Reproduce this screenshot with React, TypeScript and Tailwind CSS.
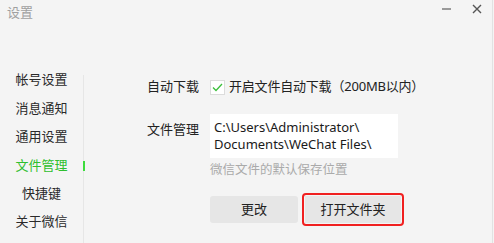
import React from "react";

const navItems = ["帐号设置", "消息通知", "通用设置", "文件管理", "快捷键", "关于微信"];

export default function App() {
  return (
    <div
      className="w-[494px] h-[243px] bg-[#f4f4f4] overflow-hidden text-[13px] text-[#222]"
      style={{ fontFamily: '"Noto Sans", "Noto Sans CJK SC", sans-serif' }}
    >
      <div className="w-[493px] h-full border-r border-[#e2e2e2] flex flex-col">
        {/* 标题栏 */}
        <div className="h-[66px] flex items-start">
          <div className="pl-[7px] pt-[3px] text-[#a0a0a0] leading-[18px]">设置</div>
          <div className="ml-auto flex items-start">
            <div className="w-[9px] h-[2px] bg-[#9a9a9a] mt-[8px] mr-[21px]" />
            <svg width="10" height="10" viewBox="0 0 10 10" className="mt-[4px] mr-[10px]">
              <path d="M1 1L9 9M9 1L1 9" stroke="#555" strokeWidth="1.4" />
            </svg>
          </div>
        </div>

        <div className="flex flex-1">
          {/* 左侧菜单 */}
          <div className="w-[83px] flex flex-col">
            {navItems.map((item) => (
              <div
                key={item}
                className={`h-[28.4px] flex items-center justify-center ${
                  item === "文件管理" ? "text-[#2fbf2f]" : "text-[#2a2a2a]"
                }`}
              >
                {item}
              </div>
            ))}
          </div>
          <div className="w-px bg-[#e6e6e6] mt-[9px] relative">
            <div className="absolute left-0 top-[86px] w-[2px] h-[10px] bg-[#3ddc3d]" />
          </div>

          {/* 右侧内容 */}
          <div className="flex flex-col pl-[63px] pt-[13px]">
            <div className="flex items-center h-[16px]">
              <div className="w-[63px]">自动下载</div>
              <div className="w-[15px] h-[15px] bg-white border border-[#dcdcdc] flex items-center justify-center">
                <svg width="11" height="9" viewBox="0 0 11 9">
                  <path d="M1 4.5L4 7.5L10 1" fill="none" stroke="#3cbf3c" strokeWidth="1.3" />
                </svg>
              </div>
              <div className="ml-[4px] whitespace-nowrap tracking-[-0.2px]">开启文件自动下载（200MB以内）</div>
            </div>

            <div className="flex mt-[19px]">
              <div className="w-[63px] pt-[6px] leading-[18px]">文件管理</div>
              <div className="flex flex-col">
                <div className="w-[188px] h-[44px] bg-white pl-[4px] pt-[5px] text-[13px] leading-[17px] text-[#1a1a1a] whitespace-nowrap">
                  <div>C:\Users\Administrator\</div>
                  <div>Documents\WeChat Files\</div>
                </div>
                <div className="mt-[4px] text-[#aaaaaa] text-[12.5px] leading-[16px]">微信文件的默认保存位置</div>
                <div className="flex items-center mt-[15px]">
                  <button className="w-[88px] h-[27px] bg-[#e6e6e6] rounded-[3px] text-[#222]">更改</button>
                  <div className="ml-[4px] w-[102px] h-[33px] border-2 border-[#f02020] rounded-[4px] p-px">
                    <button className="w-full h-full bg-[#e6e6e6] text-[#222]">打开文件夹</button>
                  </div>
                </div>
              </div>
            </div>
          </div>
        </div>
      </div>
    </div>
  );
}
